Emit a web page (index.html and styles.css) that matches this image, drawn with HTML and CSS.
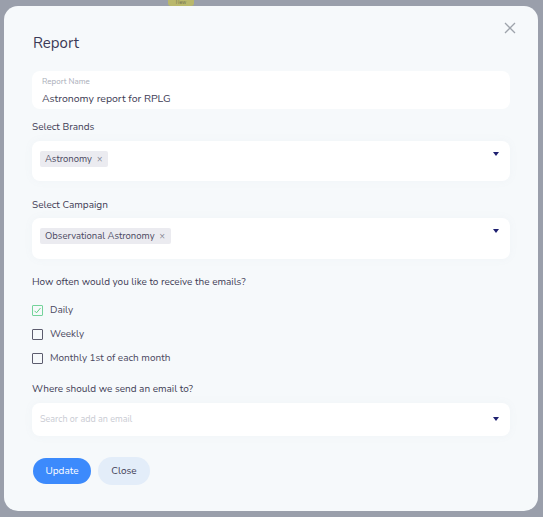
FILE: index.html
```html
<!DOCTYPE html>
<html>
<head>
<meta charset="utf-8">
<link rel="stylesheet" href="styles.css">
</head>
<body>
<div class="backdrop">
  <div class="badge">New</div>
  <div class="modal">
    <button class="close" aria-label="Close">
      <svg width="12" height="12" viewBox="0 0 12 12"><path d="M1 1L11 11M11 1L1 11" stroke="#9ea3ab" stroke-width="1.3" fill="none"/></svg>
    </button>
    <h1 class="title">Report</h1>
    <div class="field name-field">
      <div class="field-label">Report Name</div>
      <div class="field-value">Astronomy report for RPLG</div>
    </div>
    <div class="label brands-label">Select Brands</div>
    <div class="select">
      <span class="tag">Astronomy <span class="x">×</span></span>
      <span class="caret"></span>
    </div>
    <div class="label campaign-label">Select Campaign</div>
    <div class="select select-tall">
      <span class="tag">Observational Astronomy <span class="x">×</span></span>
      <span class="caret"></span>
    </div>
    <div class="label question">How often would you like to receive the emails?</div>
    <div class="checks">
      <label class="check"><span class="box checked"><svg width="9" height="9" viewBox="0 0 9 9"><path d="M1.5 4.8L3.5 6.8L7.5 2" stroke="#5fcf80" stroke-width="1" fill="none"/></svg></span>Daily</label>
      <label class="check"><span class="box"></span>Weekly</label>
      <label class="check"><span class="box"></span>Monthly 1st of each month</label>
    </div>
    <div class="label where">Where should we send an email to?</div>
    <div class="select email">
      <span class="placeholder">Search or add an email</span>
      <span class="caret"></span>
    </div>
    <div class="actions">
      <button class="btn primary">Update</button>
      <button class="btn secondary">Close</button>
    </div>
  </div>
</div>
</body>
</html>
```
FILE: styles.css
```css
* { box-sizing: border-box; }
html, body { margin: 0; padding: 0; }
body {
  background: #9a9fab;
  font-family: "Nunito", "Lato", "Open Sans", sans-serif;
  color: #3e3c55;
  width: 543px;
  height: 517px;
  overflow: hidden;
}
.backdrop {
  position: relative;
  padding: 6px 5px 6px 4px;
  height: 517px;
}
.badge {
  position: absolute;
  left: 168px;
  top: 0;
  width: 26px;
  height: 6px;
  background: #b9b86c;
  border-radius: 0 0 3px 3px;
  font-size: 5px;
  color: #6e6e50;
  text-align: center;
  line-height: 6px;
}
.modal {
  position: relative;
  background: #f6f9fb;
  border-radius: 14px;
  height: 505px;
  padding: 0 28px 0 28px;
  display: flex;
  flex-direction: column;
}
.close {
  position: absolute;
  right: 22px;
  top: 16px;
  border: 0;
  background: transparent;
  padding: 0;
  width: 12px;
  height: 12px;
  display: block;
}
.close svg { display: block; }
.title {
  margin: 27px 0 0 1px;
  font-size: 15px;
  font-weight: 400;
  line-height: 20px;
  color: #3b3a56;
}
.field {
  margin-top: 18px;
  background: #fff;
  border-radius: 8px;
  height: 38px;
  padding: 5px 10px;
}
.field-label {
  font-size: 8px;
  color: #a9adb8;
  line-height: 12px;
}
.field-value {
  font-size: 10.5px;
  line-height: 15px;
  margin-top: 3px;
  color: #3e3c55;
}
.label {
  font-size: 10px;
  line-height: 14px;
  color: #3e3c55;
}
.brands-label { margin-top: 11px; }
.campaign-label { margin-top: 17px; }
.question { margin-top: 16px; }
.where { margin-top: 17px; }
.select {
  position: relative;
  margin-top: 7px;
  background: #fff;
  border-radius: 8px;
  height: 40px;
  padding: 10px 8px;
  display: flex;
  align-items: flex-start;
  box-shadow: 0 0 10px rgba(120, 130, 150, 0.05);
}
.select-tall { height: 41px; margin-top: 6px; }
.tag {
  display: inline-flex;
  align-items: center;
  height: 16px;
  padding: 0 6px 0 5px;
  background: #ebebf0;
  border-radius: 2px;
  font-size: 9.5px;
  line-height: 16px;
  color: #4a4860;
}
.tag .x {
  font-size: 9px;
  color: #7c7c8c;
  margin-left: 5px;
}
.caret {
  position: absolute;
  right: 11px;
  top: 11px;
  width: 0;
  height: 0;
  border-left: 3.5px solid transparent;
  border-right: 3.5px solid transparent;
  border-top: 4px solid #1e2070;
}
.checks {
  margin-top: 14px;
  display: flex;
  flex-direction: column;
  gap: 10px;
}
.check {
  display: flex;
  align-items: center;
  font-size: 10px;
  line-height: 14px;
  color: #4a4860;
}
.box {
  width: 11px;
  height: 11px;
  border: 1px solid #5c5c6e;
  border-radius: 1px;
  margin-right: 7px;
  margin-left: 0;
  display: flex;
  align-items: center;
  justify-content: center;
}
.box.checked { border-color: #74d39a; }
.box svg { display: block; }
.email {
  height: 33px;
  margin-top: 7px;
  padding: 9px 8px;
  align-items: center;
}
.placeholder {
  font-size: 9px;
  color: #c9cbd3;
  line-height: 15px;
}
.email .caret { top: 14px; }
.actions {
  margin-top: 21px;
  display: flex;
  align-items: center;
  gap: 7px;
}
.btn {
  border: 0;
  font-family: inherit;
  font-size: 10px;
  border-radius: 14px;
  padding: 0;
}
.primary {
  margin-left: 1px;
  width: 58px;
  height: 26px;
  background: #3c8afc;
  color: #fff;
}
.secondary {
  width: 52px;
  height: 28px;
  background: #e3edf9;
  color: #3e3c55;
}
```
